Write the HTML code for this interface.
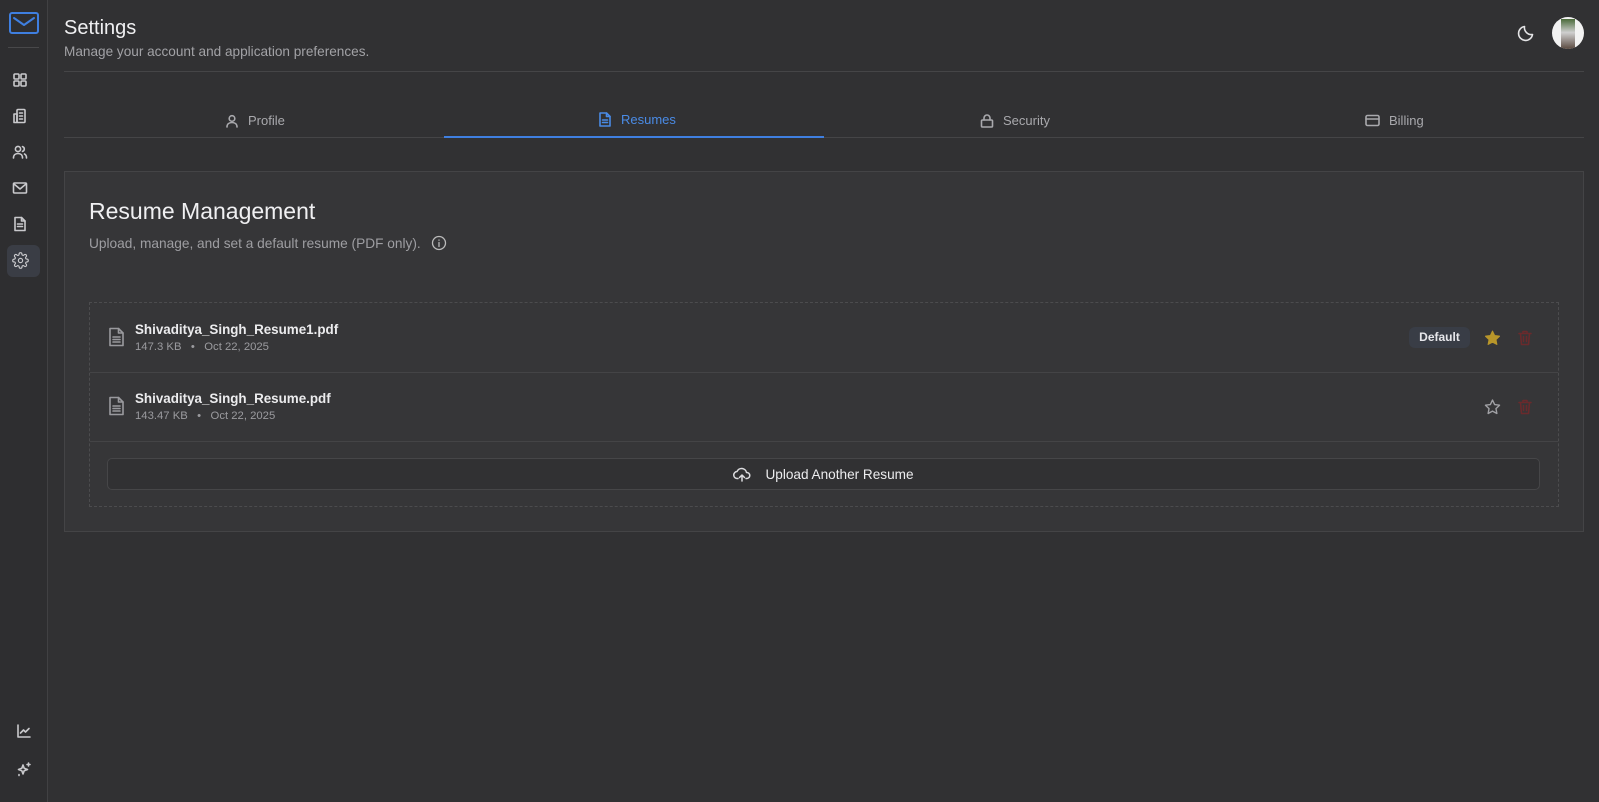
<!DOCTYPE html>
<html><head><meta charset="utf-8"><style>
*{box-sizing:border-box;margin:0;padding:0}
body{width:1599px;height:802px;background:#313133;font-family:"Liberation Sans",sans-serif;color:#e8e8ea;position:relative;overflow:hidden}
.abs{position:absolute}
.side{left:0;top:0;width:48px;height:802px;background:#2e2e30;border-right:1px solid #414143}
svg{display:block}
.ic{position:absolute;fill:none;stroke:#c9c9cc;stroke-width:1.6;stroke-linecap:round;stroke-linejoin:round}
.tab{position:absolute;top:113px;font-size:13px;color:#a9a9ad;display:flex;align-items:center;gap:9px}
.tab svg{fill:none;stroke:currentColor;stroke-width:1.6;stroke-linecap:round;stroke-linejoin:round}
.fname{font-size:13.4px;font-weight:bold;color:#ececee}
.meta{font-size:11.3px;color:#9b9b9f;margin-top:4px}
</style></head><body>
<div class="abs side"></div>
<svg class="ic" style="left:9px;top:12px;stroke:#3f7fe0;stroke-width:2" width="30" height="22" viewBox="0 0 30 22"><rect x="1" y="1" width="28" height="20" rx="2"/><path d="M5 6l10 7 10-7"/></svg>
<div class="abs" style="left:8px;top:47px;width:31px;height:1px;background:#48484a"></div>
<svg class="ic" style="left:12px;top:72px" width="16" height="16" viewBox="0 0 16 16"><rect x="2" y="2" width="5" height="5" rx="1"/><rect x="9" y="2" width="5" height="5" rx="1"/><rect x="2" y="9" width="5" height="5" rx="1"/><rect x="9" y="9" width="5" height="5" rx="1"/></svg>
<svg class="ic" style="left:12px;top:108px" width="16" height="16" viewBox="0 0 16 16"><rect x="5" y="1.5" width="8" height="13" rx="1"/><path d="M2 6h3v8.5H2zM7.5 5h3M7.5 8h3M7.5 11h3"/></svg>
<svg class="ic" style="left:12px;top:144px" width="16" height="16" viewBox="0 0 16 16"><circle cx="6" cy="5" r="2.6"/><path d="M1.5 14c0-3 2-4.5 4.5-4.5s4.5 1.5 4.5 4.5M10.5 2.6a2.5 2.5 0 010 4.8M12.5 10c1.3.6 2 1.8 2 4"/></svg>
<svg class="ic" style="left:12px;top:180px" width="16" height="16" viewBox="0 0 16 16"><rect x="1.5" y="3" width="13" height="10" rx="1"/><path d="M2 4l6 5 6-5"/></svg>
<svg class="ic" style="left:12px;top:216px" width="16" height="16" viewBox="0 0 16 16"><path d="M3 1.5h6.5l3.5 3.5v9.5H3z"/><path d="M9.5 1.5V5H13M5.5 8h5M5.5 10.5h5"/></svg>
<div class="abs" style="left:7px;top:245px;width:33px;height:32px;border-radius:6px;background:#3a3d45"></div>
<svg class="ic" style="left:12px;top:252px" width="17" height="17" viewBox="0 0 24 24"><circle cx="12" cy="12" r="3"/><path d="M19.4 15a1.7 1.7 0 00.3 1.8l.1.1a2 2 0 11-2.8 2.8l-.1-.1a1.7 1.7 0 00-1.8-.3 1.7 1.7 0 00-1 1.5V21a2 2 0 11-4 0v-.1a1.7 1.7 0 00-1.1-1.5 1.7 1.7 0 00-1.8.3l-.1.1a2 2 0 11-2.8-2.8l.1-.1a1.7 1.7 0 00.3-1.8 1.7 1.7 0 00-1.5-1H3a2 2 0 110-4h.1a1.7 1.7 0 001.5-1.1 1.7 1.7 0 00-.3-1.8l-.1-.1a2 2 0 112.8-2.8l.1.1a1.7 1.7 0 001.8.3H9a1.7 1.7 0 001-1.5V3a2 2 0 114 0v.1a1.7 1.7 0 001 1.5 1.7 1.7 0 001.8-.3l.1-.1a2 2 0 112.8 2.8l-.1.1a1.7 1.7 0 00-.3 1.8V9a1.7 1.7 0 001.5 1H21a2 2 0 110 4h-.1a1.7 1.7 0 00-1.5 1z"/></svg>
<svg class="ic" style="left:16px;top:723px" width="16" height="16" viewBox="0 0 16 16"><path d="M2 2v12h12M4.5 10l3-3 2 2 3.5-3.5"/></svg>
<svg class="ic" style="left:16px;top:762px" width="16" height="16" viewBox="0 0 16 16"><path d="M7 3l1.2 3.3L11.5 7.5 8.2 8.7 7 12 5.8 8.7 2.5 7.5l3.3-1.2zM12.5 1v3M11 2.5h3M3 12.5v1"/></svg>

<div class="abs" style="left:64px;top:17px;font-size:20px;color:#f0f0f2">Settings</div>
<div class="abs" style="left:64px;top:44px;font-size:13.6px;color:#a2a2a6">Manage your account and application preferences.</div>
<svg class="ic" style="left:1516px;top:23px;stroke:#e4e4e6" width="20" height="20" viewBox="0 0 20 20"><path d="M16.5 11.5A7 7 0 018.5 3.5a7 7 0 108 8z"/></svg>
<div class="abs" style="left:1552px;top:17px;width:32px;height:32px;border-radius:50%;background:#f2f2f2;overflow:hidden"><div style="position:absolute;left:9px;top:2px;width:14px;height:30px;background:linear-gradient(#4a6a3a,#cfcfcf 45%,#5a4a40)"></div></div>
<div class="abs" style="left:64px;top:71px;width:1520px;height:1px;background:#454547"></div>

<div class="tab" style="left:225px"><svg width="14" height="14" viewBox="0 0 14 14"><circle cx="7" cy="4.5" r="2.8"/><path d="M2 13c0-3 2.3-4.5 5-4.5s5 1.5 5 4.5"/></svg>Profile</div>
<div class="tab" style="left:598px;top:112px;color:#4a8be6"><svg width="14" height="15" viewBox="0 0 14 15"><path d="M2 1h6.5L12 4.5V14H2z"/><path d="M8.5 1v3.5H12M4.5 8h5M4.5 10.5h5"/></svg>Resumes</div>
<div class="tab" style="left:980px"><svg width="14" height="15" viewBox="0 0 14 15"><rect x="1.5" y="7" width="11" height="7" rx="1"/><path d="M4 7V5a3 3 0 016 0v2"/></svg>Security</div>
<div class="tab" style="left:1365px"><svg width="15" height="13" viewBox="0 0 15 13"><rect x="1" y="1.5" width="13" height="10" rx="1.5"/><path d="M1 5h13"/></svg>Billing</div>
<div class="abs" style="left:64px;top:137px;width:1520px;height:1px;background:#454547"></div>
<div class="abs" style="left:444px;top:135.5px;width:380px;height:2.5px;background:#3f7fe0"></div>

<div class="abs" style="left:64px;top:171px;width:1520px;height:361px;background:#363638;border:1px solid #444446"></div>
<div class="abs" style="left:89px;top:198px;font-size:23px;color:#f0f0f2">Resume Management</div>
<div class="abs" style="left:89px;top:235px;font-size:13.7px;color:#9e9ea2;display:flex;align-items:center;gap:8px">Upload, manage, and set a default resume (PDF only).<svg width="16" height="16" viewBox="0 0 16 16" style="fill:none;stroke:#bbb;stroke-width:1.3;margin-left:2px"><circle cx="8" cy="8" r="6.5"/><path d="M8 7.5v4M8 5v.2" stroke-linecap="round"/></svg></div>

<div class="abs" style="left:89px;top:302px;width:1470px;height:205px;border:1.5px dashed #4c4c4e"></div>
<div class="abs" style="left:90px;top:372px;width:1468px;height:1px;background:#444446"></div>
<div class="abs" style="left:90px;top:441px;width:1468px;height:1px;background:#444446"></div>

<svg class="ic" style="left:108px;top:327px;stroke:#9a9a9e" width="18" height="20" viewBox="0 0 18 20"><path d="M2 1.5h8.5L15 6v12.5H2z"/><path d="M10.5 1.5V6H15M5 10h7M5 12.5h7M5 15h7"/></svg>
<div class="abs" style="left:135px;top:322px"><div class="fname">Shivaditya_Singh_Resume1.pdf</div><div class="meta">147.3 KB &nbsp;&nbsp;•&nbsp;&nbsp; Oct 22, 2025</div></div>
<svg class="ic" style="left:108px;top:396px;stroke:#9a9a9e" width="18" height="20" viewBox="0 0 18 20"><path d="M2 1.5h8.5L15 6v12.5H2z"/><path d="M10.5 1.5V6H15M5 10h7M5 12.5h7M5 15h7"/></svg>
<div class="abs" style="left:135px;top:391px"><div class="fname">Shivaditya_Singh_Resume.pdf</div><div class="meta">143.47 KB &nbsp;&nbsp;•&nbsp;&nbsp; Oct 22, 2025</div></div>

<div class="abs" style="left:1409px;top:327px;width:61px;height:21px;border-radius:6px;background:#393d46;font-size:12px;font-weight:bold;color:#e6e6ea;text-align:center;line-height:21px">Default</div>
<svg class="abs" style="left:1484px;top:330px" width="17" height="16" viewBox="0 0 24 23"><path d="M12 1.5l3.1 6.5 7 .9-5.1 4.9 1.3 7L12 17.4l-6.3 3.4 1.3-7L1.9 8.9l7-.9z" fill="#b8962a" stroke="#b8962a" stroke-width="1.5" stroke-linejoin="round"/></svg>
<svg class="abs" style="left:1484px;top:399px" width="17" height="16" viewBox="0 0 24 23"><path d="M12 1.5l3.1 6.5 7 .9-5.1 4.9 1.3 7L12 17.4l-6.3 3.4 1.3-7L1.9 8.9l7-.9z" fill="none" stroke="#a0a0a4" stroke-width="2" stroke-linejoin="round"/></svg>
<svg class="ic" style="left:1518px;top:330px;stroke:#6a2a2c" width="14" height="16" viewBox="0 0 14 16"><path d="M1 3.5h12M5 3.5V1.5h4v2M2.5 3.5l1 11h7l1-11M5.5 6.5v5M8.5 6.5v5"/></svg>
<svg class="ic" style="left:1518px;top:399px;stroke:#6a2a2c" width="14" height="16" viewBox="0 0 14 16"><path d="M1 3.5h12M5 3.5V1.5h4v2M2.5 3.5l1 11h7l1-11M5.5 6.5v5M8.5 6.5v5"/></svg>

<div class="abs" style="left:107px;top:458px;width:1433px;height:32px;border:1px solid #464648;border-radius:5px;background:#313133;display:flex;align-items:center;justify-content:center;gap:14px;font-size:13.6px;color:#ececee">
<svg width="18" height="16" viewBox="0 0 18 16" style="fill:none;stroke:#dcdcdf;stroke-width:1.5;stroke-linecap:round;stroke-linejoin:round"><path d="M5 12.5H4.5a3.5 3.5 0 01-.5-7 5 5 0 019.5 1 3 3 0 01.5 6H13"/><path d="M9 15V9M6.5 11.5L9 9l2.5 2.5"/></svg>Upload Another Resume</div>
</body></html>
